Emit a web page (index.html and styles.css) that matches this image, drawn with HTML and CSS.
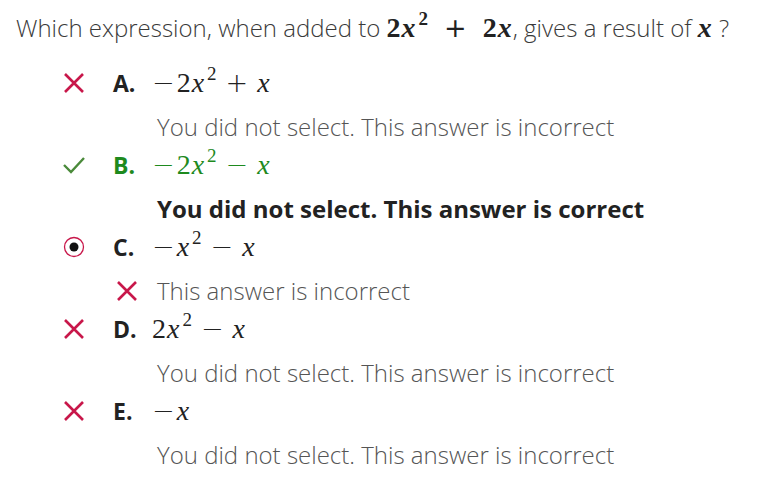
FILE: index.html
```html
<!DOCTYPE html>
<html>
<head>
<meta charset="utf-8">
<link rel="stylesheet" href="styles.css">
</head>
<body>
<div class="question">Which expression, when added to <span class="math bold">2<i>x</i><sup>2</sup><span class="op wide">+</span>2<i>x</i></span>, gives a result of <span class="math bold"><i>x</i></span> ?</div>
<div class="options">
  <div class="option">
    <div class="row">
      <span class="icon"><svg width="22" height="22" viewBox="0 0 22 22"><path d="M2 2 L20 20 M20 2 L2 20" stroke="#c8174a" stroke-width="2.6" fill="none"/></svg></span>
      <span class="letter">A.</span>
      <span class="math"><span class="minus">&minus;</span>2<i>x</i><sup>2</sup><span class="op">+</span><i>x</i></span>
    </div>
    <div class="feedback">You did not select. This answer is incorrect</div>
  </div>
  <div class="option correct">
    <div class="row">
      <span class="icon"><svg width="22" height="22" viewBox="0 0 22 22"><path d="M1 11 L8 18 L21 4" stroke="#4a8a3a" stroke-width="2.4" fill="none"/></svg></span>
      <span class="letter">B.</span>
      <span class="math"><span class="minus">&minus;</span>2<i>x</i><sup>2</sup><span class="op">&minus;</span><i>x</i></span>
    </div>
    <div class="feedback strong">You did not select. This answer is correct</div>
  </div>
  <div class="option">
    <div class="row">
      <span class="icon"><svg width="22" height="22" viewBox="0 0 22 22"><circle cx="11" cy="11" r="9.5" stroke="#c8174a" stroke-width="1.3" fill="#fff"/><circle cx="11" cy="11" r="4.5" fill="#111"/></svg></span>
      <span class="letter">C.</span>
      <span class="math"><span class="minus">&minus;</span><i>x</i><sup>2</sup><span class="op">&minus;</span><i>x</i></span>
    </div>
    <div class="feedback with-icon"><svg class="fb-icon" width="22" height="22" viewBox="0 0 22 22"><path d="M2 2 L20 20 M20 2 L2 20" stroke="#c8174a" stroke-width="2.6" fill="none"/></svg>This answer is incorrect</div>
  </div>
  <div class="option">
    <div class="row">
      <span class="icon"><svg width="22" height="22" viewBox="0 0 22 22"><path d="M2 2 L20 20 M20 2 L2 20" stroke="#c8174a" stroke-width="2.6" fill="none"/></svg></span>
      <span class="letter">D.</span>
      <span class="math">2<i>x</i><sup>2</sup><span class="op">&minus;</span><i>x</i></span>
    </div>
    <div class="feedback">You did not select. This answer is incorrect</div>
  </div>
  <div class="option">
    <div class="row">
      <span class="icon"><svg width="22" height="22" viewBox="0 0 22 22"><path d="M2 2 L20 20 M20 2 L2 20" stroke="#c8174a" stroke-width="2.6" fill="none"/></svg></span>
      <span class="letter">E.</span>
      <span class="math"><span class="minus">&minus;</span><i>x</i></span>
    </div>
    <div class="feedback">You did not select. This answer is incorrect</div>
  </div>
</div>
</body>
</html>
```
FILE: styles.css
```css
html, body { margin: 0; padding: 0; background: #fff; }
body {
  font-family: "Open Sans", sans-serif;
  font-weight: 300;
  color: #444;
  padding: 12px 0 0 16px;
}
.question {
  font-size: 24px;
  line-height: 32px;
  height: 32px;
  color: #3a3a3a;
  white-space: nowrap;
}
.math {
  font-family: "Liberation Serif", "DejaVu Serif", serif;
  font-weight: 400;
  font-size: 28px;
  color: #222;
  letter-spacing: 1px;
}
.math i { font-style: italic; }
.math sup { font-size: 19px; line-height: 0; vertical-align: 0; position: relative; top: -12px; margin-left: 2px; }
.math .minus { font-family: "DejaVu Sans", sans-serif; font-weight: 300; font-size: 27px; margin-right: 1px; }
.math .op { font-family: "DejaVu Sans", sans-serif; font-weight: 300; font-size: 27px; margin: 0 8px; }
.math .op.wide { margin: 0 15px; }
.math.bold { font-weight: 700; }
.math.bold .op { font-weight: 400; }
.options { margin-top: 19px; }
.row {
  display: flex;
  align-items: center;
  height: 40px;
}
.icon {
  width: 22px; height: 22px;
  margin-left: 47px;
  display: flex;
}
.letter {
  font-weight: 700;
  font-size: 23px;
  color: #222;
  margin-left: 28px;
  width: 39px;
}
.correct .letter, .correct .math { color: #1e8a1e; }
.feedback {
  font-size: 24px;
  line-height: 36px;
  height: 36px;
  padding-top: 6px;
  margin-left: 141px;
  color: #555;
  white-space: nowrap;
}
.feedback.strong { font-weight: 700; color: #222; }
.feedback.with-icon { display: flex; align-items: center; margin-left: 100px; }
.fb-icon { margin-right: 19px; }
```
